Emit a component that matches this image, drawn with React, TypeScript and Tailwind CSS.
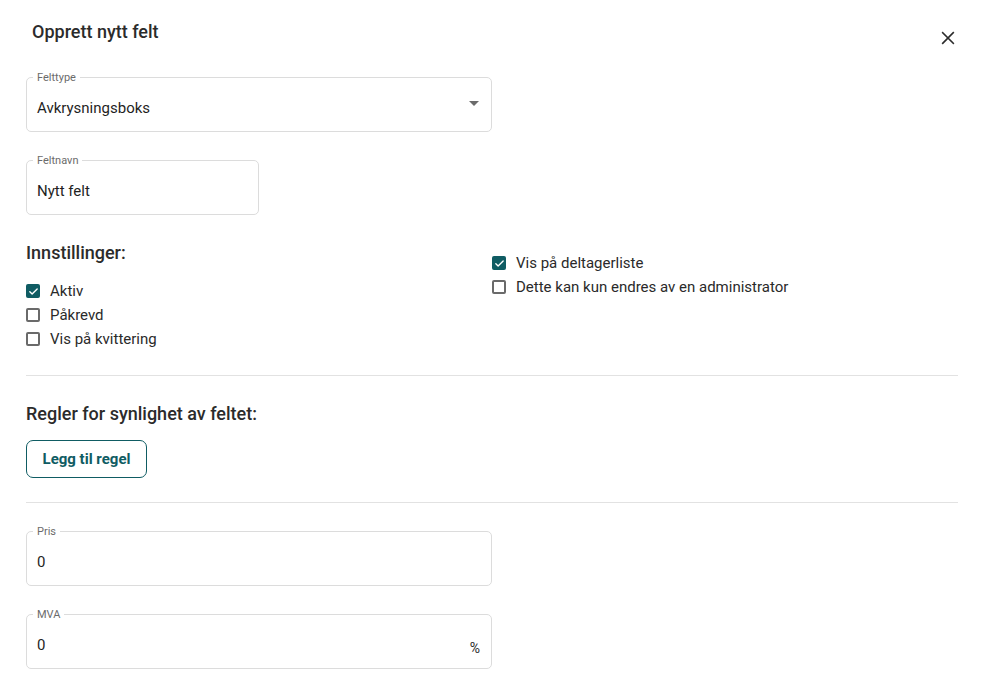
import React from 'react';

const TEAL = '#0f5c63';

interface FieldProps {
  label: string;
  value: string;
  width: string;
  suffix?: React.ReactNode;
}

const OutlinedField: React.FC<FieldProps> = ({ label, value, width, suffix }) => (
  <div className={`relative h-[55px] ${width} rounded-[5px] border border-[#dcdcdc] flex items-center pl-[10px] pr-[12px] pt-[8px]`}>
    <span className="absolute -top-[7px] left-[6px] bg-white px-[4px] text-[11px] leading-[14px] text-[#6b6b6b]">
      {label}
    </span>
    <span className="flex-1 text-[15px] text-[#1f1f1f]">{value}</span>
    {suffix}
  </div>
);

const Checkbox: React.FC<{ checked?: boolean; label: string }> = ({ checked, label }) => (
  <label className="flex items-center gap-[10px] h-[24px] text-[15px] text-[#2a2a2a]">
    {checked ? (
      <span className="w-[14px] h-[14px] rounded-[2px] bg-[#0f5c63] flex items-center justify-center">
        <svg width="11" height="11" viewBox="0 0 24 24" fill="none" stroke="white" strokeWidth="3" strokeLinecap="round" strokeLinejoin="round">
          <path d="M4 12.5l5 5L20 6.5" />
        </svg>
      </span>
    ) : (
      <span className="w-[14px] h-[14px] rounded-[2px] border-[2px] border-[#6a6a6a] bg-white" />
    )}
    <span>{label}</span>
  </label>
);

export default function App() {
  return (
    <div className="w-[985px] h-[688px] bg-white overflow-hidden" style={{ fontFamily: 'Roboto, "Noto Sans", sans-serif' }}>
      <div className="pl-[26px] pr-[27px]">
        <div className="flex items-center justify-between pt-[12px] h-[64px]">
          <h2 className="pl-[6px] text-[18px] font-medium text-[#2b2b2b] -mt-[14px]">Opprett nytt felt</h2>
          <button className="mr-[1px] text-[#2b2b2b]">
            <svg width="18" height="18" viewBox="0 0 24 24" fill="none" stroke="currentColor" strokeWidth="2.2" strokeLinecap="square">
              <path d="M5 5l14 14M19 5L5 19" />
            </svg>
          </button>
        </div>

        <div className="mt-[13px]">
          <OutlinedField
            label="Felttype"
            value="Avkrysningsboks"
            width="w-[466px]"
            suffix={
              <svg width="10" height="5" viewBox="0 0 10 5" className="-mt-[11px]">
                <path d="M0 0h10L5 5z" fill="#6b6b6b" />
              </svg>
            }
          />
        </div>

        <div className="mt-[28px]">
          <OutlinedField label="Feltnavn" value="Nytt felt" width="w-[233px]" />
        </div>

        <div className="grid grid-cols-[466px_1fr] mt-[26px]">
          <div>
            <h3 className="text-[18px] font-medium text-[#2b2b2b] leading-[24px]">Innstillinger:</h3>
            <div className="mt-[14px] flex flex-col">
              <Checkbox checked label="Aktiv" />
              <Checkbox label="Påkrevd" />
              <Checkbox label="Vis på kvittering" />
            </div>
          </div>
          <div className="pt-[10px] flex flex-col">
            <Checkbox checked label="Vis på deltagerliste" />
            <Checkbox label="Dette kan kun endres av en administrator" />
          </div>
        </div>

        <div className="mt-[24px] border-t border-[#e2e2e2]" />

        <h3 className="mt-[26px] text-[18px] font-medium text-[#2b2b2b] leading-[24px]">Regler for synlighet av feltet:</h3>
        <button
          className="mt-[14px] h-[38px] w-[121px] rounded-[7px] border border-[#0f5c63] text-[15px] font-bold"
          style={{ color: TEAL }}
        >
          Legg til regel
        </button>

        <div className="mt-[24px] border-t border-[#e2e2e2]" />

        <div className="mt-[28px]">
          <OutlinedField label="Pris" value="0" width="w-[466px]" />
        </div>
        <div className="mt-[28px]">
          <OutlinedField
            label="MVA"
            value="0"
            width="w-[466px]"
            suffix={<span className="text-[14px] text-[#2a2a2a] mt-[6px] -mr-[1px]">%</span>}
          />
        </div>
      </div>
    </div>
  );
}
